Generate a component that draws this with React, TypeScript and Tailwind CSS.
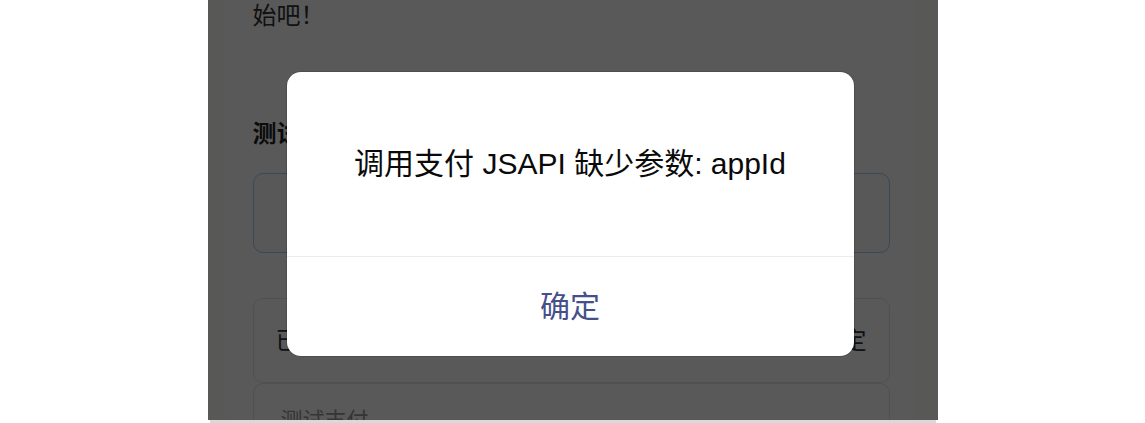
const font = { fontFamily: '"Liberation Sans", "Noto Sans CJK SC", sans-serif' };

function PageContent() {
  return (
    <div className="h-full pl-[28px] pr-[26px] text-[#333]">
      <p className="text-[24px] leading-[32px]">始吧！</p>

      <h2 className="mt-[86px] text-[24px] font-bold leading-[32px] text-[#222]">测试支付参数</h2>

      <div className="mt-[23px] h-[80px] rounded-[10px] border-[1.5px] border-[#a9cbef] bg-[#fbfcfd]" />

      <div className="mt-[45px] flex h-[85px] items-center justify-between rounded-[10px] border border-[#e6e6e6] px-[22px]">
        <span className="text-[24px] leading-[32px]">已选支付方式</span>
        <span className="text-[24px] leading-[32px]">待确定</span>
      </div>

      <div className="h-[60px] rounded-t-[10px] border-x border-t border-[#e6e6e6] px-[27px] pt-[22px]">
        <span className="text-[22px] leading-[30px] text-[#999]">测试支付</span>
      </div>
    </div>
  );
}

function AlertDialog() {
  return (
    <div className="absolute left-[79px] top-[72px] flex h-[284px] w-[567px] flex-col overflow-hidden rounded-[14px] bg-white shadow-[0_0_0_1px_rgba(0,0,0,0.12)]">
      <div className="flex h-[184px] shrink-0 items-center justify-center">
        <p className="text-[30px] leading-[36px] text-[#0a0a0a]">调用支付 JSAPI 缺少参数: appId</p>
      </div>
      <div className="h-px shrink-0 bg-[#ececec]" />
      <button className="flex flex-1 items-center justify-center text-[30px] text-[#45508a]">确定</button>
    </div>
  );
}

export default function App() {
  return (
    <div className="flex h-[423px] w-[1145px] justify-center bg-white" style={font}>
      <div className="h-[423px] w-[730px]">
        <div className="relative flex h-[420px] overflow-hidden bg-white">
          <div className="w-[17px] shrink-0 bg-[#fcfbf5]" />
          <div className="min-w-0 flex-1">
            <PageContent />
          </div>
          <div className="w-[22px] shrink-0 bg-[#fdfcf6]" />
          <div className="absolute inset-0 bg-black/65" />
          <AlertDialog />
        </div>
        <div className="mx-[2px] h-[3px] bg-[#d9d9d9]" />
      </div>
    </div>
  );
}
